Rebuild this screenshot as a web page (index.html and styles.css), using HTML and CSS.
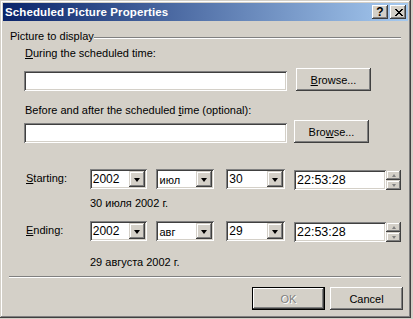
FILE: index.html
```html
<!DOCTYPE html>
<html lang="en">
<head>
  <meta charset="UTF-8">
  <title>Scheduled Picture Properties</title>
  <link rel="stylesheet" href="styles.css">
</head>
<body>
  <div class="window">
    <div class="titlebar">
      <span class="title">Scheduled Picture Properties</span>
      <div class="caption-btns">
        <div class="cap-btn help">?</div>
        <div class="cap-btn close">
          <svg width="8" height="7" viewBox="0 0 8 7">
            <path d="M0 0h2v1h1v1h2v-1h1v-1h2v1h-1v1h-1v1h-1v1h1v1h1v1h1v1h-2v-1h-1v-1h-2v1h-1v1h-2v-1h1v-1h1v-1h1v-1h-1v-1h-1v-1h-1z" fill="#000"/>
          </svg>
        </div>
      </div>
    </div>

    <div class="content">
      <div class="group-head">
        <span>Picture to display</span>
        <div class="etch"></div>
      </div>

      <div class="field-label"><u>D</u>uring the scheduled time:</div>
      <div class="file-row">
        <div class="field"></div>
        <div class="btn browse"><span><u>B</u>rowse...</span></div>
      </div>

      <div class="field-label second">Before and after the scheduled <u>t</u>ime (optional):</div>
      <div class="file-row narrow">
        <div class="field"></div>
        <div class="btn browse"><span>Bro<u>w</u>se...</span></div>
      </div>

      <div class="date-row first">
        <div class="date-label"><u>S</u>tarting:</div>
        <div class="combo year"><span class="combo-text">2002</span><div class="drop"><i></i></div></div>
        <div class="combo month"><span class="combo-text">июл</span><div class="drop"><i></i></div></div>
        <div class="combo day"><span class="combo-text">30</span><div class="drop"><i></i></div></div>
        <div class="time">
          <div class="time-field">22:53:28</div>
          <div class="spin">
            <div class="spin-btn"><i class="up"></i></div>
            <div class="spin-btn"><i class="down"></i></div>
          </div>
        </div>
      </div>
      <div class="date-text first">30 июля 2002 г.</div>

      <div class="date-row second">
        <div class="date-label"><u>E</u>nding:</div>
        <div class="combo year"><span class="combo-text">2002</span><div class="drop"><i></i></div></div>
        <div class="combo month"><span class="combo-text">авг</span><div class="drop"><i></i></div></div>
        <div class="combo day"><span class="combo-text">29</span><div class="drop"><i></i></div></div>
        <div class="time">
          <div class="time-field">22:53:28</div>
          <div class="spin">
            <div class="spin-btn"><i class="up"></i></div>
            <div class="spin-btn"><i class="down"></i></div>
          </div>
        </div>
      </div>
      <div class="date-text second">29 августа 2002 г.</div>

      <div class="etch separator"></div>

      <div class="actions">
        <div class="btn default disabled"><span>OK</span></div>
        <div class="btn"><span>Cancel</span></div>
      </div>
    </div>
  </div>
</body>
</html>
```

FILE: styles.css
```css
body {
  margin: 0;
  background-color: #d4d0c8;
  font-family: 'Liberation Sans', Arial, sans-serif;
  font-size: 11px;
  color: #000;
}

.window {
  width: 411px;
  height: 318px;
  box-sizing: border-box;
  padding: 3px;
  background-color: #d4d0c8;
  box-shadow: inset -1px -1px #404040, inset 1px 1px #d4d0c8,
              inset -2px -2px #808080, inset 2px 2px #fff;
}

.titlebar {
  height: 18px;
  display: flex;
  align-items: center;
  padding: 0 2px;
  background: linear-gradient(to right, #0a246a, #a6caf0);
  color: #fff;
}

.title {
  font-weight: bold;
  font-size: 11.5px;
  letter-spacing: 0.1px;
}

.caption-btns {
  margin-left: auto;
  display: flex;
  gap: 2px;
}

.cap-btn {
  width: 16px;
  height: 14px;
  box-sizing: border-box;
  display: flex;
  align-items: center;
  justify-content: center;
  background-color: #d4d0c8;
  color: #000;
  font-weight: bold;
  font-size: 12px;
  line-height: 14px;
  box-shadow: inset -1px -1px #404040, inset 1px 1px #fff,
              inset -2px -2px #808080, inset 2px 2px #d4d0c8;
}

.cap-btn svg {
  display: block;
  margin-left: 1px;
}

.content {
  padding: 0 7px 0 6px;
}

/* etched lines */
.etch {
  height: 0;
  border-top: 1px solid #808080;
  border-bottom: 1px solid #fff;
}

.group-head {
  margin-top: 8px;
  height: 14px;
  display: flex;
  align-items: flex-start;
  padding-left: 1px;
  line-height: 14px;
}

.group-head .etch {
  flex: 1;
  margin-top: 8px;
}

.field-label {
  margin: 4px 0 0 16px;
  height: 13px;
  line-height: 13px;
}

.field-label.second {
  margin-top: 13px;
}

.file-row {
  margin: 8px 0 0 15px;
  display: flex;
  align-items: flex-end;
  gap: 9px;
}

.file-row.narrow {
  margin-top: 3px;
  gap: 7px;
}

.field {
  width: 263px;
  height: 20px;
  box-sizing: border-box;
  background-color: #fff;
  box-shadow: inset 1px 1px #808080, inset -1px -1px #fff,
              inset 2px 2px #404040, inset -2px -2px #d4d0c8;
}

.btn {
  width: 73px;
  height: 23px;
  box-sizing: border-box;
  display: flex;
  align-items: center;
  justify-content: center;
  background-color: #d4d0c8;
  box-shadow: inset -1px -1px #404040, inset 1px 1px #fff,
              inset -2px -2px #808080, inset 2px 2px #d4d0c8;
}

.btn.browse {
  width: 75px;
}

.btn.default {
  border: 1px solid #000;
}

.btn.disabled {
  color: #808080;
  text-shadow: 1px 1px #fff;
}

.date-row {
  margin-left: 17px;
  height: 21px;
  display: flex;
  align-items: flex-start;
}

.date-row.first {
  margin-top: 26px;
}

.date-row.second {
  margin-top: 11px;
}

.date-label {
  width: 64px;
  height: 20px;
  line-height: 19px;
}

.combo {
  width: 58px;
  height: 20px;
  box-sizing: border-box;
  display: flex;
  align-items: center;
  padding: 2px;
  background-color: #fff;
  box-shadow: inset 1px 1px #808080, inset -1px -1px #fff,
              inset 2px 2px #404040, inset -2px -2px #d4d0c8;
}

.combo.month {
  margin-left: 9px;
}

.combo.day {
  width: 59px;
  margin-left: 12px;
}

.combo-text {
  flex: 1;
  padding-left: 1px;
  font-size: 12px;
}

.combo.month .combo-text {
  font-size: 11px;
  padding-top: 2px;
}

.drop {
  width: 16px;
  height: 16px;
  box-sizing: border-box;
  display: flex;
  align-items: center;
  justify-content: center;
  background-color: #d4d0c8;
  box-shadow: inset -1px -1px #404040, inset 1px 1px #d4d0c8,
              inset -2px -2px #808080, inset 2px 2px #fff;
}

.drop i {
  width: 0;
  height: 0;
  border-left: 3.5px solid transparent;
  border-right: 3.5px solid transparent;
  border-top: 4px solid #000;
  margin-top: 1px;
}

.time {
  margin: 1px 0 0 9px;
  display: flex;
}

.time-field {
  width: 92px;
  height: 20px;
  box-sizing: border-box;
  padding: 2px 0 0 3px;
  font-size: 12.5px;
  line-height: 16px;
  background-color: #fff;
  box-shadow: inset 1px 1px #808080, inset -1px -1px #fff,
              inset 2px 2px #404040, inset -2px -2px #d4d0c8;
}

.spin {
  display: flex;
  flex-direction: column;
}

.spin-btn {
  width: 15px;
  height: 10px;
  box-sizing: border-box;
  display: flex;
  align-items: center;
  justify-content: center;
  background-color: #d4d0c8;
  box-shadow: inset -1px -1px #404040, inset 1px 1px #d4d0c8,
              inset -2px -2px #808080, inset 2px 2px #fff;
}

.spin-btn i {
  width: 0;
  height: 0;
  border-left: 2.5px solid transparent;
  border-right: 2.5px solid transparent;
}

.spin-btn i.up {
  border-bottom: 3px solid #808080;
}

.spin-btn i.down {
  border-top: 3px solid #808080;
}

.date-text {
  margin-left: 81px;
  height: 13px;
  line-height: 13px;
}

.date-text.first {
  margin-top: 7px;
}

.date-text.second {
  margin-top: 14px;
}

.separator {
  margin-top: 7px;
}

.actions {
  margin: 9px -2px 0 0;
  display: flex;
  justify-content: flex-end;
  gap: 5px;
}
```
